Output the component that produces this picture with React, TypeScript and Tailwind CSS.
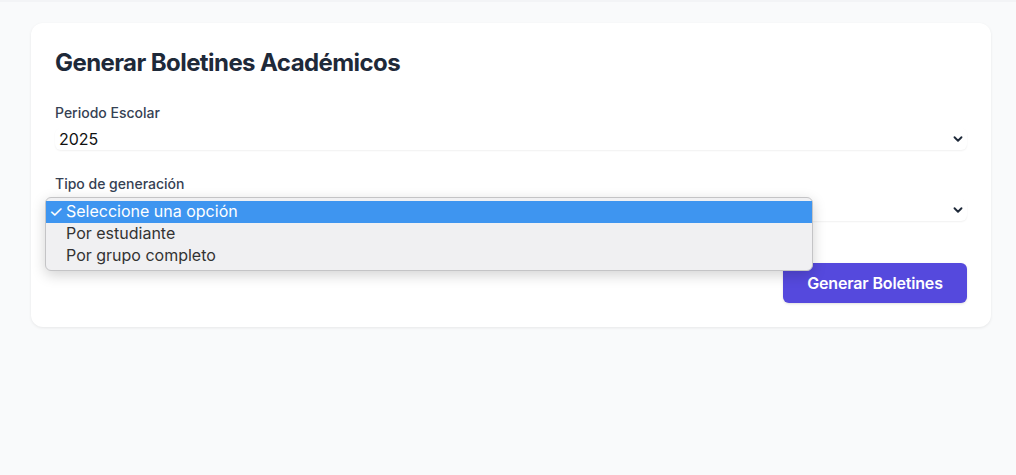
import { ChevronDown } from 'lucide-react'

const OPTIONS = ['Seleccione una opción', 'Por estudiante', 'Por grupo completo']

function FakeSelect({ value }: { value?: string }) {
  return (
    <div className="mt-[5px] h-[22px] w-full rounded-md bg-white shadow-[0_1px_2px_rgba(0,0,0,0.06)] flex items-center justify-between pl-1 pr-[2px]">
      <span className="text-[16px] text-[#111] leading-none">{value}</span>
      <ChevronDown size={14} strokeWidth={3.2} className="text-gray-800" />
    </div>
  )
}

export default function App() {
  return (
    <div
      className="min-h-[475px] bg-gray-50 border-t-2 border-gray-100"
      style={{ fontFamily: 'Inter, "Noto Sans", sans-serif' }}
    >
      <div className="pt-[21px] pl-[31px]">
        <div className="relative w-[960px] rounded-xl bg-white shadow-[0_1px_3px_rgba(0,0,0,0.08)] p-6">
          <h1 className="text-2xl leading-8 font-bold tracking-[-0.024em] text-gray-800 mb-6">
            Generar Boletines Académicos
          </h1>

          {/* Periodo */}
          <div className="mb-6">
            <label className="block text-sm leading-5 font-medium text-gray-700">Periodo Escolar</label>
            <FakeSelect value="2025" />
          </div>

          {/* Tipo */}
          <div>
            <label className="block text-sm leading-5 font-medium text-gray-700">Tipo de generación</label>
            <FakeSelect />
          </div>

          <div className="flex justify-end mt-[42px]">
            <button className="h-10 w-[184px] rounded-md bg-[#5549dd] text-white font-semibold text-base tracking-[-0.01em] shadow-sm">
              Generar Boletines
            </button>
          </div>

          {/* open native list */}
          <div className="absolute left-[14px] top-[174px] w-[768px] rounded-md border border-[#c4c4c6] bg-[#f0f0f2] shadow-[0_4px_14px_rgba(0,0,0,0.18)] py-[3px]">
            {OPTIONS.map((o, i) => (
              <div
                key={o}
                className={`h-[22px] flex items-center pb-[3px] text-[16px] ${
                  i === 0 ? 'bg-[#3e95f0] text-white' : 'text-[#333]'
                }`}
              >
                <span className="w-[20px] pl-[3px] text-[16px]">{i === 0 ? '✓' : ''}</span>
                {o}
              </div>
            ))}
          </div>
        </div>
      </div>
    </div>
  )
}
